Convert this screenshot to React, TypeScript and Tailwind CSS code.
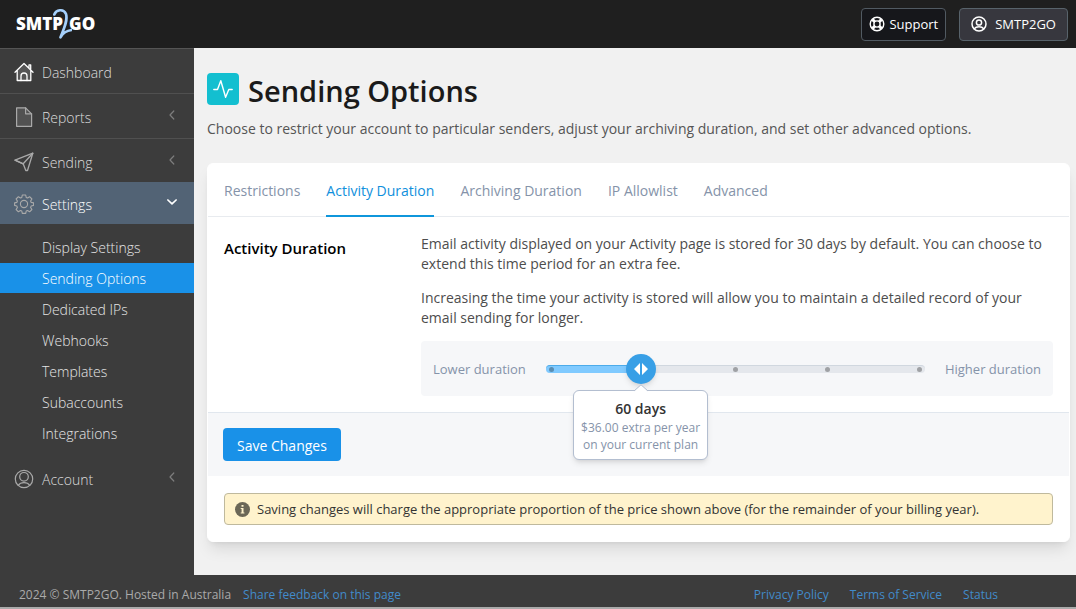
import { useState } from "react";
import type { ReactNode } from "react";

const iconProps = {
  fill: "none",
  stroke: "currentColor",
  strokeLinecap: "round" as const,
  strokeLinejoin: "round" as const,
  "aria-hidden": true,
};

function HomeIcon() {
  return (
    <svg width="20" height="20" viewBox="0 0 20 20" {...iconProps} strokeWidth="1.3" className="text-white">
      <path d="M3 9v9.3h14V9L10 2.5z" fill="#555" stroke="none" />
      <path d="M1 10.3 10 1.5l9 8.800M3.200 8.500v10h13.600v-10M15 6V2.800h1.700v4.500" />
      <path d="M7 18.500v-4.500a3 3 0 0 1 6 0v4.500" />
    </svg>
  );
}

function FileIcon() {
  return (
    <svg width="20" height="20" viewBox="0 0 20 20" {...iconProps} strokeWidth="1.2">
      <path d="M2.600.8h9l6 6v12.500h-15z" fill="#525252" />
      <path d="M11.600.8v6h6" />
    </svg>
  );
}

function SendIcon() {
  return (
    <svg width="20" height="20" viewBox="0 0 20 20" {...iconProps} strokeWidth="1.3">
      <path d="M1 8.200 18.800 1.200 13.500 18.500h-1.700l-2.600-6.700z" />
      <path d="M18.800 1.200 9.200 11.800 1 8.200" />
    </svg>
  );
}

function GearIcon() {
  return (
    <svg width="20" height="20" viewBox="0 0 20 20" {...iconProps} strokeWidth="1.100">
      <path
        d="M8.300 1h3.400l.5 2.400 1.300.6 2.100-1.300 2.300 2.300-1.300 2.100.6 1.300 2.400.5v2.500l-2.400.6-.6 1.400 1.300 2.100-2.300 2.300-2.100-1.300-1.300.6-.5 2.300H8.300l-.5-2.300-1.300-.6-2.100 1.300-2.300-2.300 1.300-2.100-.6-1.400L.6 11.400V8.900L2.800 8.400l.6-1.300L2.100 5l2.300-2.300L6.500 4l1.300-.6z"
      />
      <circle cx="10" cy="10" r="3.600" />
    </svg>
  );
}

function UserIcon() {
  return (
    <svg width="20" height="20" viewBox="0 0 20 20" {...iconProps} strokeWidth="1.200">
      <circle cx="10" cy="10" r="8.700" />
      <circle cx="10" cy="7.800" r="4.300" />
      <path d="M4.200 16.300c1.400-2 3.500-2.700 5.800-2.700s4.400.7 5.800 2.700" />
    </svg>
  );
}

function AvatarIcon() {
  return (
    <svg width="16" height="16" viewBox="0 0 16 16" {...iconProps} strokeWidth="1.500">
      <circle cx="8" cy="8" r="7" />
      <circle cx="8" cy="6.500" r="2.600" />
      <path d="M3.300 12.800c1.200-1.600 2.800-2 4.700-2s3.500.4 4.700 2" />
    </svg>
  );
}

function LifeRingIcon() {
  return (
    <svg width="16" height="16" viewBox="0 0 16 16" {...iconProps} strokeWidth="1.400">
      <circle cx="8" cy="8" r="6.800" />
      <circle cx="8" cy="8" r="3.100" />
      <path d="m3.400 3.400 2.300 2.300m4.600 4.600 2.300 2.300m0-9.200-2.300 2.300m-4.600 4.600-2.300 2.300" strokeWidth="3" strokeLinecap="butt" />
    </svg>
  );
}

function Chevron({ open = false }: { open?: boolean }) {
  return open ? (
    <svg width="10" height="10" viewBox="0 0 10 10" {...iconProps} strokeWidth="1.700" className="text-white">
      <path d="M.9 3 5 6.800 9.100 3" />
    </svg>
  ) : (
    <svg width="10" height="10" viewBox="0 0 10 10" {...iconProps} strokeWidth="1.200" className="text-[#7d7d7d]">
      <path d="M6.800 1 3 5l3.800 4" />
    </svg>
  );
}

function Logo() {
  return (
    <a href="#home" aria-label="SMTP2GO" className="relative flex items-center gap-1.5 text-[17px] font-extrabold text-white">
      <span>SMTP</span>
      <svg
        width="20"
        height="32"
        viewBox="0 0 20 32"
        {...iconProps}
        stroke="#a5d0fb"
        strokeWidth="2.600"
        className="absolute left-9"
      >
        <path d="M2.300 6.500C4 2 11.500 0 14 6c2 6.500-2 14.500-5.500 23.300 2-3.500 5.500-6.600 11-7.300" />
      </svg>
      <span>GO</span>
    </a>
  );
}

function NavItem({
  icon,
  label,
  className = "",
  arrow = true,
  open = false,
}: {
  icon: ReactNode;
  label: string;
  className?: string;
  arrow?: boolean;
  open?: boolean;
}) {
  return (
    <a href={"#" + label.toLowerCase()} className={"flex items-center gap-2 pt-0.5 pr-4 pl-[14px] text-[#a9a9a9] " + className}>
      {icon}
      <span className={"flex-1 pt-0.5 font-light " + (open ? "text-white" : "text-[#dcdcdc]")}>{label}</span>
      {arrow && (
        <span className="mr-px pb-1">
          <Chevron open={open} />
        </span>
      )}
    </a>
  );
}

const settingsPages = [
  "Display Settings",
  "Sending Options",
  "Dedicated IPs",
  "Webhooks",
  "Templates",
  "Subaccounts",
  "Integrations",
];

function Sidebar() {
  return (
    <nav className="w-[194px] shrink-0 border-t border-[#555] bg-[#3c3c3c]">
      <NavItem icon={<HomeIcon />} label="Dashboard" arrow={false} className="h-[45px] border-b border-[#505050]" />
      <NavItem icon={<FileIcon />} label="Reports" className="h-[45px] border-b border-[#505050]" />
      <NavItem icon={<SendIcon />} label="Sending" className="h-[43px]" />
      <NavItem icon={<GearIcon />} label="Settings" open className="h-[42px] bg-[#526375]" />
      <ul className="flex flex-col gap-px py-2">
        {settingsPages.map((page) => (
          <li key={page}>
            <a
              href={"#" + page.toLowerCase().replace(" ", "-")}
              className={
                "flex h-[30px] items-center pt-0.5 pl-[42px] font-light " +
                (page === "Sending Options" ? "bg-[#1991e8] text-white" : "text-[#e6e6e6]")
              }
            >
              {page}
            </a>
          </li>
        ))}
      </ul>
      <NavItem icon={<UserIcon />} label="Account" className="h-[44px]" />
    </nav>
  );
}

const durations = ["30 days", "60 days", "90 days", "180 days", "365 days"];

function DurationSlider() {
  const [step, setStep] = useState(1);
  const percent = step * 25 + "%";
  return (
    <div className="mt-[13px] flex h-[55px] items-center gap-5 rounded bg-[#f6f7f9] px-3 text-[13px] text-[#8593a9]">
      <label htmlFor="duration">Lower duration</label>
      <div className="relative h-2 flex-1 rounded border-t border-[#d0d7df] bg-[#e4e7ec]">
        <div className="absolute -top-px left-0 h-2 rounded border-t border-[#4cabea] bg-[#80caff]" style={{ width: percent }} />
        <div className="absolute inset-0 flex items-center justify-between px-[3px]">
          {durations.map((d) => (
            <span key={d} className="size-[5px] rounded-full bg-black/30" />
          ))}
        </div>
        <div className="absolute top-1/2 flex w-0 justify-center" style={{ left: percent }}>
          <div className="absolute -top-[15px] flex size-[30px] items-center justify-center rounded-full bg-[#389fe6] shadow-md">
            <svg width="16" height="12" viewBox="0 0 16 12" fill="#fff" aria-hidden>
              <path d="M7 0v12L1 6zM9 0v12L15 6z" />
            </svg>
          </div>
          <div className="absolute top-[21px] z-10 w-[135px] rounded-md border border-[#b3bed0] bg-white pt-2 pb-[6px] text-center shadow-md">
            <svg width="14" height="8" viewBox="0 0 14 8" className="absolute -top-[7px] left-[60px]" aria-hidden>
              <path d="M0 7.500 7 .8l7 6.700z" fill="#fff" />
              <path d="M0 7 7 .8 14 7" fill="none" stroke="#b3bed0" />
            </svg>
            <p className="text-sm leading-5 font-semibold text-[#333]">{durations[step]}</p>
            <p className="text-xs leading-[17px]">
              $36.00 extra per year
              <br />
              on your current plan
            </p>
          </div>
        </div>
        <input
          id="duration"
          type="range"
          min={0}
          max={4}
          value={step}
          onChange={(e) => setStep(Number(e.target.value))}
          className="absolute -inset-x-2 -top-3 z-20 h-8 cursor-pointer opacity-0"
        />
      </div>
      <span>Higher duration</span>
    </div>
  );
}

const tabs = ["Restrictions", "Activity Duration", "Archiving Duration", "IP Allowlist", "Advanced"];

export default function App() {
  return (
    <div className="flex min-h-screen flex-col bg-[#3c3c3c] font-['Open_Sans',sans-serif] text-sm">
      <header className="flex h-12 items-center justify-between bg-[#1f1f1f] pr-2 pl-4 text-white">
        <Logo />
        <div className="flex gap-[13px]">
          <button type="button" className="flex h-[33px] items-center gap-1 rounded border border-[#515a62] bg-[#16171b] px-[7px] text-[13px]">
            <LifeRingIcon />
            Support
          </button>
          <button type="button" className="flex h-[33px] items-center gap-2 rounded border border-[#58636b] bg-[#37373e] px-[11px] text-[13px]">
            <AvatarIcon />
            SMTP2GO
          </button>
        </div>
      </header>

      <div className="flex flex-1">
        <Sidebar />
        <main className="min-w-0 flex-1 bg-[#f1f1f1] pt-[25px] pr-[6px] pb-8 pl-[13px]">
          <div className="flex items-start gap-[9px]">
            <span className="flex size-8 items-center justify-center rounded bg-[#13bfd0] text-white">
              <svg width="20" height="20" viewBox="0 0 20 20" {...iconProps} strokeWidth="1.400">
                <path d="M.8 10.500h3.700L7.800 1.700l4.800 16.600 3.200-7.800h3.400" />
              </svg>
            </span>
            <h1 className="text-[29px] leading-9 font-semibold text-[#1a1a1a]">Sending Options</h1>
          </div>
          <p className="mt-[10px] leading-5 text-[#555]">
            Choose to restrict your account to particular senders, adjust your archiving duration, and set other advanced options.
          </p>

          <section className="mt-6 rounded-md border border-white bg-white shadow-lg">
            <div role="tablist" className="flex gap-[26px] border-b border-[#e8ebef] px-4">
              {tabs.map((tab) => (
                <button
                  key={tab}
                  type="button"
                  role="tab"
                  aria-selected={tab === "Activity Duration"}
                  className={
                    "-mb-px h-[53px] border-b-2 pt-0.5 " +
                    (tab === "Activity Duration" ? "border-[#0f96db] text-[#0f8fdc]" : "border-transparent text-[#8593a9]")
                  }
                >
                  {tab}
                </button>
              ))}
            </div>

            <div className="flex px-4 pt-[17px] pb-4">
              <h2 className="w-[197px] shrink-0 pt-[2px] text-[15px] leading-6 font-semibold text-black">Activity Duration</h2>
              <div className="min-w-0 flex-1 leading-5 text-[#4d4d4d]">
                <p>
                  Email activity displayed on your Activity page is stored for 30 days by default. You can choose to extend this time
                  period for an extra fee.
                </p>
                <p className="mt-[14px]">
                  Increasing the time your activity is stored will allow you to maintain a detailed record of your email sending for
                  longer.
                </p>
                <DurationSlider />
              </div>
            </div>

            <div className="border-t border-[#e1e7ee] bg-[#f6f7f9] p-[15px]">
              <button type="button" className="h-[33px] rounded bg-[#1991e8] px-[14px] pt-0.5 text-white">
                Save Changes
              </button>
            </div>

            <div className="px-4 pt-[17px] pb-4">
              <p className="flex h-8 items-center gap-[7px] rounded-sm border border-[#bfb99d] bg-[#fff3cd] px-[10px] text-[13px] text-[#333]">
                <svg width="15" height="15" viewBox="0 0 15 15" aria-hidden>
                  <circle cx="7.500" cy="7.500" r="7.500" fill="#6b6757" />
                  <path d="M6.500 3h2v1.800h-2zM5.700 6h2.800v4.600h.9v1H5.700v-1h.9V7h-.9z" fill="#fff3cd" />
                </svg>
                Saving changes will charge the appropriate proportion of the price shown above (for the remainder of your billing year).
              </p>
            </div>
          </section>
        </main>
      </div>

      <footer className="flex h-[34px] items-center justify-between border-b-2 border-[#aaa] pt-2 pr-[78px] pl-[19px] text-xs text-[#aaa]">
        <p className="flex gap-3">
          2024 © SMTP2GO. Hosted in Australia
          <a href="#feedback" className="text-[#428bca]">Share feedback on this page</a>
        </p>
        <div className="flex gap-[21px] text-[#428bca]">
          <a href="#privacy">Privacy Policy</a>
          <a href="#terms">Terms of Service</a>
          <a href="#status">Status</a>
        </div>
      </footer>
    </div>
  );
}
